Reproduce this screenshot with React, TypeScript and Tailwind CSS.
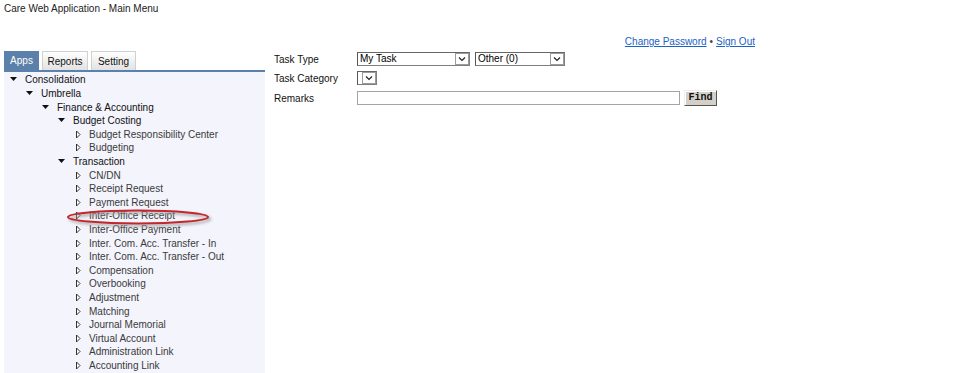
import React from "react";

type Node = { label: string; level: number; open?: boolean };

const tree: Node[] = [
  { label: "Consolidation", level: 0, open: true },
  { label: "Umbrella", level: 1, open: true },
  { label: "Finance & Accounting", level: 2, open: true },
  { label: "Budget Costing", level: 3, open: true },
  { label: "Budget Responsibility Center", level: 4 },
  { label: "Budgeting", level: 4 },
  { label: "Transaction", level: 3, open: true },
  { label: "CN/DN", level: 4 },
  { label: "Receipt Request", level: 4 },
  { label: "Payment Request", level: 4 },
  { label: "Inter-Office Receipt", level: 4 },
  { label: "Inter-Office Payment", level: 4 },
  { label: "Inter. Com. Acc. Transfer - In", level: 4 },
  { label: "Inter. Com. Acc. Transfer - Out", level: 4 },
  { label: "Compensation", level: 4 },
  { label: "Overbooking", level: 4 },
  { label: "Adjustment", level: 4 },
  { label: "Matching", level: 4 },
  { label: "Journal Memorial", level: 4 },
  { label: "Virtual Account", level: 4 },
  { label: "Administration Link", level: 4 },
  { label: "Accounting Link", level: 4 },
];

const padByLevel = ["pl-[5px]", "pl-[21px]", "pl-[37px]", "pl-[53px]", "pl-[69px]"];

function Arrow({ open }: { open?: boolean }) {
  if (open) {
    return (
      <svg width="16" height="13" viewBox="0 0 16 13" className="shrink-0">
        <polygon points="1,4 8,4 4.5,8" fill="#111" />
      </svg>
    );
  }
  return (
    <svg width="16" height="13" viewBox="0 0 16 13" className="shrink-0">
      <polygon points="3.5,3 3.5,10 7,6.5" fill="#fff" stroke="#333" strokeWidth="1" />
    </svg>
  );
}

function Chevron() {
  return (
    <div className="flex h-[12px] w-[14px] items-center justify-center border border-[#9c9c9c] bg-white">
      <svg width="8" height="6" viewBox="0 0 8 6">
        <polyline points="1,1.5 4,4.5 7,1.5" fill="none" stroke="#222" strokeWidth="1.2" />
      </svg>
    </div>
  );
}

function Select({ width, text }: { width: string; text?: string }) {
  return (
    <div
      className={`flex h-[14px] ${width} items-center border border-[#7f7f7f] border-l-[#555] border-t-[#666] bg-white`}
    >
      <div className="flex-1 truncate pl-[2px] leading-[12px] text-[#000]">{text}</div>
      <Chevron />
    </div>
  );
}

export default function App() {
  return (
    <div
      className="relative min-h-screen bg-white text-[10px] text-[#333]"
      style={{ fontFamily: '"Liberation Sans", Arial, sans-serif' }}
    >
      <div className="pl-[4px] pt-[2px] leading-[13px] text-[#222]">Care Web Application - Main Menu</div>

      <div className="mt-[20px] flex w-[755px] justify-end leading-[13px]">
        <a className="text-[#1a62c6] underline">Change Password</a>
        <span className="mx-[3px] text-[#444]">•</span>
        <a className="text-[#1a62c6] underline">Sign Out</a>
      </div>

      <div className="mt-[5px] flex">
        <div className="ml-[4px] w-[261px]">
          <div className="flex h-[19px] items-end gap-[3px] border-b-2 border-[#5b82ae]">
            <div className="flex h-[19px] w-[35px] items-center justify-center bg-[#5b80a9] text-white">Apps</div>
            <div className="flex h-[19px] w-[46px] items-center justify-center border border-b-0 border-[#d0d0d0] bg-gradient-to-b from-white to-[#e2e2e2] text-[#111]">
              Reports
            </div>
            <div className="flex h-[19px] w-[45px] items-center justify-center border border-b-0 border-[#d0d0d0] bg-gradient-to-b from-white to-[#e2e2e2] text-[#111]">
              Setting
            </div>
          </div>
          <div className="relative bg-[#f4f4fc] pb-[10px] pt-[1px]">
            {tree.map((n, i) => (
              <div key={i} className={`flex h-[13.62px] items-center ${padByLevel[n.level]} leading-[13px]`}>
                <Arrow open={n.open} />
                <span className={n.open ? "text-[#111]" : "text-[#3a3a3a]"}>{n.label}</span>
              </div>
            ))}
            <svg
              className="pointer-events-none absolute left-[54px] top-[133px]"
              width="160"
              height="24"
              viewBox="0 0 160 24"
            >
              <defs>
                <filter id="sh" x="-10%" y="-50%" width="120%" height="200%">
                  <feGaussianBlur stdDeviation="1.5" />
                </filter>
              </defs>
              <ellipse cx="82" cy="14" rx="70" ry="6.5" fill="none" stroke="#9a9a9a" strokeWidth="2" filter="url(#sh)" />
              <ellipse cx="80" cy="12" rx="70" ry="6.5" fill="none" stroke="#c3262c" strokeWidth="2" />
            </svg>
          </div>
        </div>

        <div className="ml-[9px] -mt-[1px]">
          <div className="grid grid-cols-[83px_auto] items-center gap-y-[5px]">
            <div className="leading-[13px] text-[#111]">Task Type</div>
            <div className="flex gap-[5px]">
              <Select width="w-[113px]" text="My Task" />
              <Select width="w-[90px]" text="Other (0)" />
            </div>
            <div className="leading-[13px] text-[#111]">Task Category</div>
            <div className="flex">
              <Select width="w-[20px]" />
            </div>
            <div className="leading-[13px] text-[#111]">Remarks</div>
            <div className="flex items-center">
              <div className="h-[14px] w-[323px] border border-[#a5a5a5] bg-white" />
              <button
                className="ml-[4px] flex h-[16px] w-[33px] items-center justify-center border border-[#555] border-l-[#eee] border-t-[#eee] bg-[#d4d0c8] text-[10px] font-bold leading-[12px] text-[#111] shadow-[inset_1px_1px_0_#fff]"
                style={{ fontFamily: '"Liberation Mono", "Courier New", monospace' }}
              >
                Find
              </button>
            </div>
          </div>
        </div>
      </div>
    </div>
  );
}
